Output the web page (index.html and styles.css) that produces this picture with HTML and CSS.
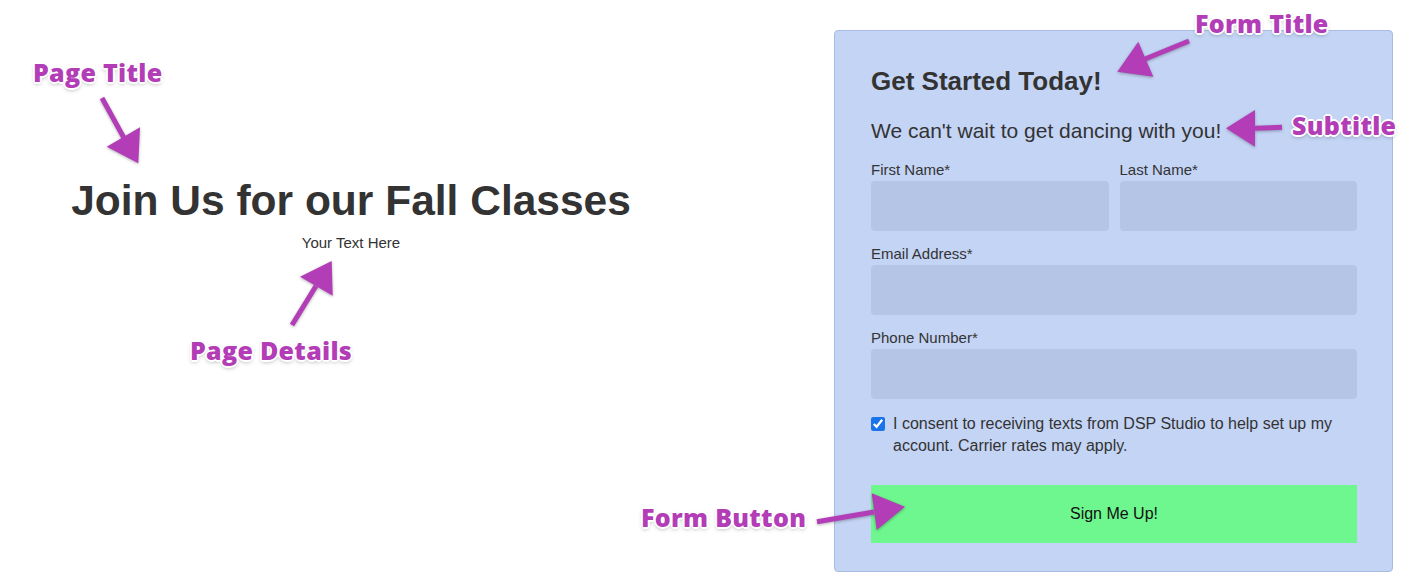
FILE: index.html
```html
<!DOCTYPE html>
<html lang="en">
<head>
    <meta charset="UTF-8">
    <meta name="viewport" content="width=device-width, initial-scale=1.0">
    <title>Fall Classes Signup</title>
    <link rel="stylesheet" href="styles.css">
</head>
<body>
    <div class="page">
        <div class="hero">
            <h1 class="hero-title">Join Us for our Fall Classes</h1>
            <p class="hero-text">Your Text Here</p>
        </div>

        <form class="signup" onsubmit="return false;">
            <h2 class="form-title">Get Started Today!</h2>
            <p class="form-subtitle">We can't wait to get dancing with you!</p>

            <div class="row">
                <div class="field">
                    <label for="first">First Name*</label>
                    <input type="text" id="first">
                </div>
                <div class="field">
                    <label for="last">Last Name*</label>
                    <input type="text" id="last">
                </div>
            </div>
            <div class="field">
                <label for="email">Email Address*</label>
                <input type="email" id="email">
            </div>
            <div class="field">
                <label for="phone">Phone Number*</label>
                <input type="tel" id="phone">
            </div>

            <label class="consent">
                <input type="checkbox" checked>
                <span>I consent to receiving texts from DSP Studio to help set up my account. Carrier rates may apply.</span>
            </label>

            <button class="submit" type="submit">Sign Me Up!</button>
        </form>
    </div>

    <!-- annotation layer -->
    <div class="notes">
        <svg class="arrows" width="1408" height="584" viewBox="0 0 1408 584">
            <g class="arrow">
                <line x1="102" y1="98" x2="124" y2="138"/>
                <polygon points="106.7,146.7 140,127.3 138.3,163.3"/>
            </g>
            <g class="arrow">
                <line x1="292" y1="325" x2="316" y2="286"/>
                <polygon points="300,276.7 331.7,261 332.7,295.7"/>
            </g>
            <g class="arrow">
                <line x1="1189" y1="41" x2="1145" y2="59"/>
                <polygon points="1138.3,41.7 1153.3,76.7 1117.3,71.7"/>
            </g>
            <g class="arrow">
                <line x1="1282" y1="127.3" x2="1255" y2="128.3"/>
                <polygon points="1255,110 1255,146.7 1226,128.3"/>
            </g>
            <g class="arrow">
                <line x1="817" y1="521.7" x2="874" y2="512"/>
                <polygon points="871.7,493.3 876.7,530 905,506.7"/>
            </g>
        </svg>
        <span class="note note-page-title">Page Title</span>
        <span class="note note-page-details">Page Details</span>
        <span class="note note-form-title">Form Title</span>
        <span class="note note-subtitle">Subtitle</span>
        <span class="note note-form-button">Form Button</span>
    </div>
</body>
</html>
```

FILE: styles.css
```css
* {
    box-sizing: border-box;
}

body {
    margin: 0;
    position: relative;
    width: 1408px;
    height: 584px;
    overflow: hidden;
    background-color: #fff;
    font-family: "Liberation Sans", Arial, sans-serif;
    color: #333;
}

.page {
    display: flex;
    align-items: flex-start;
    padding-top: 30px;
}

/* left side */
.hero {
    width: 702px;
    padding-top: 146px;
    text-align: center;
}

.hero-title {
    margin: 0;
    font-size: 42.5px;
    line-height: 50px;
    font-weight: 700;
}

.hero-text {
    margin: 8px 0 0;
    font-size: 15px;
    line-height: 18px;
}

/* form card */
.signup {
    width: 559px;
    margin-left: 132px;
    padding: 35px 35px 28px 36px;
    background-color: #c4d4f5;
    border: 1px solid #a9bbe2;
    border-radius: 4px;
}

.form-title {
    margin: 0;
    font-size: 26px;
    line-height: 30px;
    font-weight: 700;
}

.form-subtitle {
    margin: 22px 0 18px;
    font-size: 21px;
    line-height: 25px;
}

.row {
    display: flex;
    gap: 11px;
}

.row .field {
    flex: 1;
}

.field {
    display: flex;
    flex-direction: column;
    gap: 2px;
    margin-bottom: 14px;
}

.field label {
    font-size: 15px;
    line-height: 18px;
}

.field input {
    height: 50px;
    border: none;
    border-radius: 4px;
    background-color: #b5c5e6;
    font-size: 15px;
    padding: 0 12px;
}

.consent {
    display: flex;
    align-items: flex-start;
    gap: 8px;
    margin-top: 0;
    font-size: 16px;
    line-height: 22px;
}

.consent input {
    width: 14px;
    height: 14px;
    margin: 4px 0 0 0;
    flex: none;
    accent-color: #1a73e8;
}

.submit {
    display: block;
    width: 100%;
    height: 58px;
    margin-top: 28px;
    border: none;
    background-color: #6ef78e;
    font-family: "Liberation Sans", Arial, sans-serif;
    font-size: 16px;
    color: #111;
    cursor: pointer;
}

/* annotations */
.notes {
    position: absolute;
    top: 0;
    left: 0;
    width: 1408px;
    height: 584px;
    pointer-events: none;
}

.arrows {
    position: absolute;
    top: 0;
    left: 0;
    filter: drop-shadow(0 1px 1.5px rgba(0, 0, 0, 0.3));
}

.arrow line {
    stroke: #b23db6;
    stroke-width: 5;
}

.arrow polygon {
    fill: #b23db6;
}

.note {
    position: absolute;
    font-family: "Open Sans", sans-serif;
    font-weight: 800;
    font-size: 25px;
    line-height: 30px;
    letter-spacing: 0.3px;
    white-space: nowrap;
    color: #b23db6;
    text-shadow:
        1px 0 0 #fff, -1px 0 0 #fff, 0 1px 0 #fff, 0 -1px 0 #fff,
        2px 0 0 #fff, -2px 0 0 #fff, 0 2px 0 #fff, 0 -2px 0 #fff,
        1px 1px 0 #fff, -1px -1px 0 #fff, 1px -1px 0 #fff, -1px 1px 0 #fff,
        0 2px 4px rgba(0, 0, 0, 0.35);
}

.note-page-title {
    left: 33px;
    top: 57px;
}

.note-page-details {
    left: 190px;
    top: 335px;
}

.note-form-title {
    left: 1195px;
    top: 8px;
}

.note-subtitle {
    left: 1292px;
    top: 110px;
}

.note-form-button {
    left: 641px;
    top: 502px;
}
```
